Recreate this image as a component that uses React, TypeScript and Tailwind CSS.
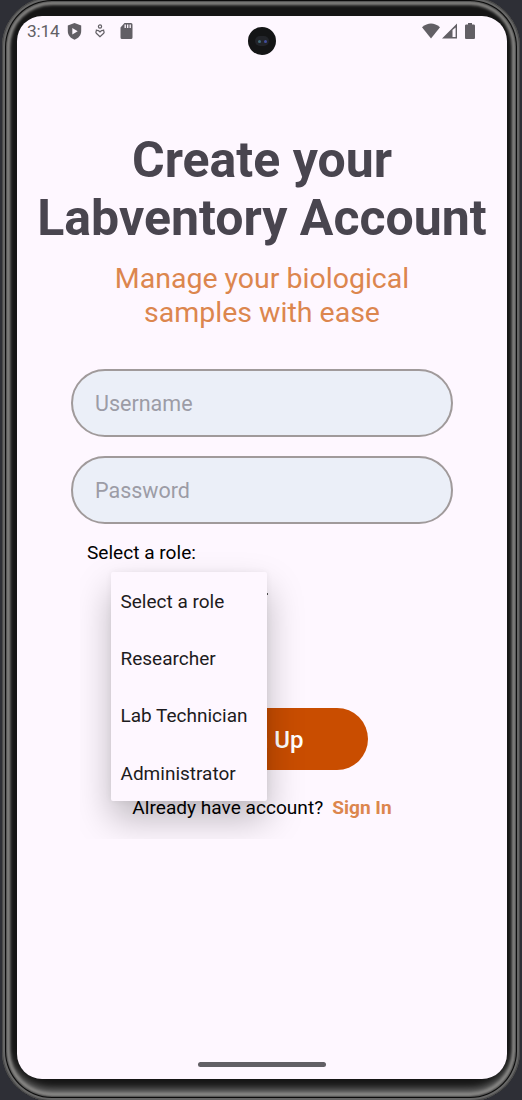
import React from "react";

const roles = ["Select a role", "Researcher", "Lab Technician", "Administrator"];

function StatusBar() {
  return (
    <div className="flex h-[30px] items-center justify-between pl-[10px] pr-[32px] text-[#625f65]">
      <div className="flex items-center">
        <span className="w-[33px] text-[17.300px] leading-[30px] tracking-[-0.2px]">3:14</span>
        <svg className="ml-[7px] h-[17px] w-[15px]" viewBox="0 0 15 17">
          <path fill="currentColor" d="M7.500 0 14.200 2.600V8c0 4.200-2.700 7.200-6.700 8.700C3.500 15.200 .8 12.200 .8 8V2.600Z" />
          <path fill="#fef7ff" d="m5.300 5 5.400 3.200-5.400 3.200Z" />
        </svg>
        <svg className="ml-[12px] h-[14px] w-[12px]" viewBox="0 0 12 14" fill="none" stroke="currentColor" strokeWidth="1.200">
          <circle cx="6" cy="2.500" r="1.600" />
          <path d="M1.800 5.700 3.200 6.700M10.200 5.700 8.800 6.700M6 12.700 2.300 9.300C.8 7.400 3.300 5.500 5 7L6 8 7 7c1.700-1.500 4.200.4 2.700 2.300Z" />
        </svg>
        <svg className="ml-[14px] h-[16px] w-[13px]" viewBox="0 0 13 16">
          <path fill="currentColor" d="M4.500 0H11a1.500 1.500 0 0 1 1.500 1.500v13A1.500 1.500 0 0 1 11 16H2a1.500 1.500 0 0 1-1.500-1.500V4.500Z" />
          <path stroke="#fef7ff" strokeWidth="1.300" d="M5.200 1.500v3.500M7.700 1.500v3.500M10.200 1.500v3.500" />
        </svg>
      </div>
      <div className="flex items-center">
        <svg className="h-[16px] w-[18px]" viewBox="0 0 18 16">
          <path fill="currentColor" d="M0 4.300Q9-3.200 18 4.300L9 15.500Z" />
        </svg>
        <svg className="ml-[2px] h-[16px] w-[15px]" viewBox="0 0 15 16">
          <path fill="currentColor" fillRule="evenodd" d="M15 .5V15.500H0ZM13.600 4.500 10.500 7V14h3.100Z" />
        </svg>
        <svg className="ml-[8px] h-[16px] w-[10px]" viewBox="0 0 10 16">
          <path fill="currentColor" d="M3 0h4v1.500h1.700c.7 0 1.300.6 1.300 1.300v11.900c0 .7-.6 1.300-1.300 1.300H1.300C.6 16 0 15.400 0 14.700V2.800c0-.7.6-1.300 1.300-1.300H3Z" />
        </svg>
      </div>
    </div>
  );
}

function Field({ label, type }: { label: string; type: string }) {
  return (
    <input
      type={type}
      placeholder={label}
      aria-label={label}
      className="h-[68px] w-[382px] rounded-full border-[2.500px] border-[#a09a9b] bg-[#ebeff8] px-[22px] pt-[1px] text-[21.500px] text-[#49454f] outline-none placeholder:text-[#9c9ca6]"
    />
  );
}

function RoleMenu() {
  return (
    <div className="absolute left-[63px] top-[518px] h-[305px] w-[230px] overflow-hidden">
      <ul className="ml-[31px] mt-[38px] h-[229px] w-[156px] rounded-[2px] bg-[#fef7ff] shadow-[0_18px_36px_rgba(0,0,0,0.260),0_0_6px_rgba(0,0,0,0.060)]">
        {roles.map((role) => (
          <li key={role} className="flex h-[57.250px] items-center pl-[9.500px] pt-[3px] text-[19px] text-[#1d1b20]">
            {role}
          </li>
        ))}
      </ul>
    </div>
  );
}

export default function App() {
  return (
    <div className="h-[1100px] w-[522px] overflow-hidden bg-[#2e2f36] px-[2px]">
      <div className="-mt-[3px] h-[1104px] rounded-[50px] bg-[#151515] px-[15px] pt-[19px] font-[Roboto,sans-serif] shadow-[inset_0_0_0_1px_#4a4a4a,inset_0_0_0_3px_#666,inset_0_0_0_4px_#0c0c0c,inset_0_0_2px_5px_#444,inset_0_0_3px_8px_#8b8a88,inset_0_-8px_9px_4px_#777]">
        <div className="relative h-[1063px] w-[490px] rounded-[25px] bg-[#fef7ff]">
          <StatusBar />
          <div className="absolute left-[231px] top-[11px] flex size-[28px] items-center justify-center rounded-full bg-[#141516]">
            <div className="flex h-[10px] w-[14px] items-center justify-center gap-[3px] rounded-full bg-[#222429]">
              <i className="size-[3px] rounded-full bg-[#426b79]" />
              <i className="size-[3px] rounded-full bg-[#414d9e]" />
            </div>
          </div>
          <main className="flex flex-col items-center pt-[85px]">
            <h1 className="whitespace-nowrap text-center text-[50px] font-bold leading-[58px] text-[#49454f]">
              Create your<br />Labventory Account
            </h1>
            <p className="mt-[15px] text-center text-[28.500px] leading-[34px] text-[#dc864e]">
              Manage your biological<br />samples with ease
            </p>
            <form className="mt-[39px] flex flex-col gap-[19px]">
              <Field label="Username" type="text" />
              <Field label="Password" type="password" />
            </form>
            <label className="mt-[18px] self-start pl-[70px] text-[19.100px] leading-[22px] text-black">Select a role:</label>
            <span className="ml-[247px] mt-[29px] h-[2px] w-[4px] self-start bg-[#555]" />
            <button className="mt-[113px] h-[62px] w-[211px] rounded-full bg-[#c94d00] pt-[2px] text-[24px] font-medium text-white">Sign Up</button>
            <p className="mt-[27px] flex gap-[9px] text-[19.100px] leading-[22px] text-black">
              <span>Already have account?</span>
              <a className="font-bold text-[#dc864e]">Sign In</a>
            </p>
          </main>
          <RoleMenu />
          <div className="absolute left-[181px] top-[1046px] h-[5px] w-[128px] rounded-full bg-[#625f65]" />
        </div>
      </div>
    </div>
  );
}
